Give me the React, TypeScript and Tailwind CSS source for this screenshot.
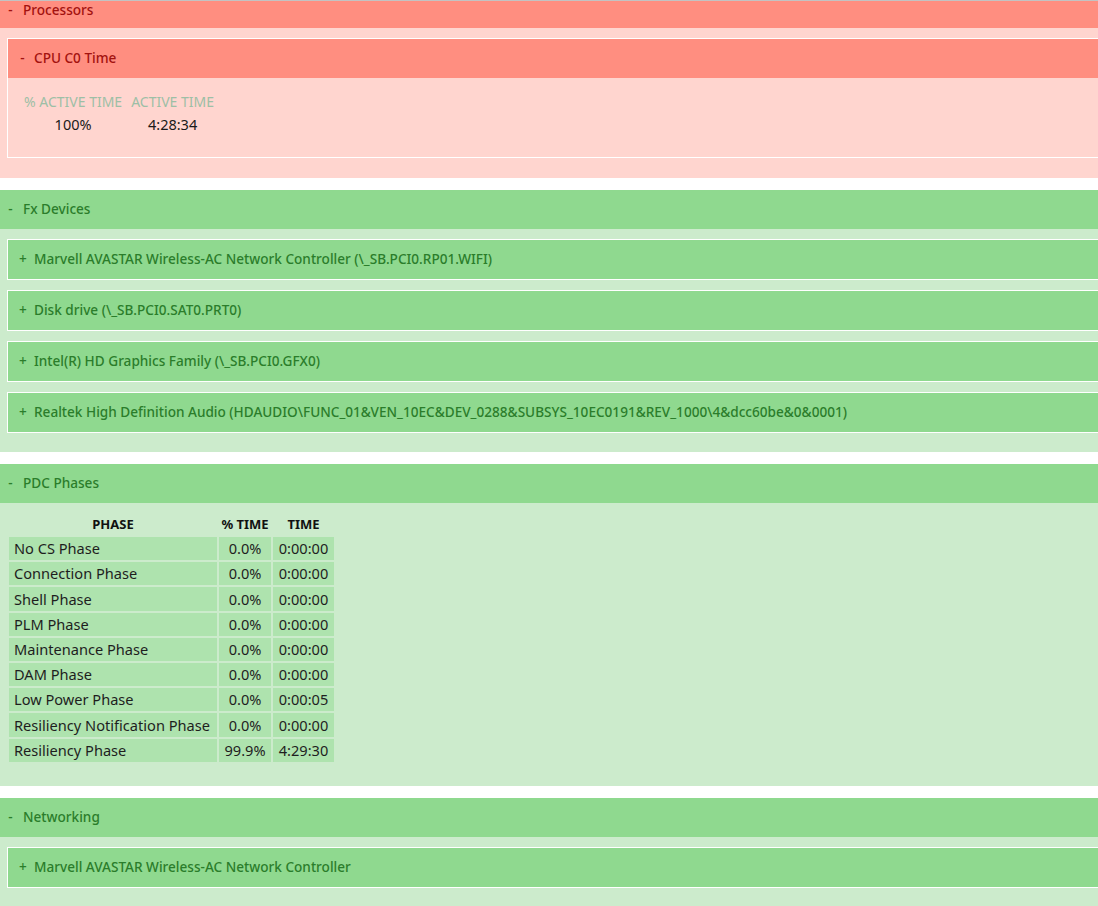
import type { ReactNode } from "react";

type Tone = "red" | "green";

const tones = {
  red: {
    head: "bg-[#ff8e80] text-[#a3120f]",
    body: "bg-[#ffd5cf]",
  },
  green: {
    head: "bg-[#8fd98f] text-[#2b7d2b]",
    body: "bg-[#ccebcc]",
  },
};

const Header = ({ sign, title, tone, nested, className = "" }: { sign: string; title: string; tone: Tone; nested?: boolean; className?: string }) => (
  <div
    className={`flex h-[39px] items-center text-[13.6px] font-medium ${nested ? "gap-[8px] pl-[11px]" : "gap-[9px] pl-[7px]"} ${tones[tone].head} ${className}`}
  >
    <span className="w-[7px] text-center">{sign}</span>
    <span className="whitespace-nowrap">{title}</span>
  </div>
);

const Section = ({ title, tone, children, className, headClass }: { title: string; tone: Tone; children: ReactNode; className: string; headClass?: string }) => (
  <section>
    <Header sign="-" title={title} tone={tone} className={headClass} />
    <div className={`${tones[tone].body} ${className}`}>{children}</div>
  </section>
);

const Device = ({ name }: { name: string }) => (
  <div className="ml-[7px] border border-r-0 border-white">
    <Header sign="+" title={name} tone="green" nested />
  </div>
);

const devices = [
  "Marvell AVASTAR Wireless-AC Network Controller (\\_SB.PCI0.RP01.WIFI)",
  "Disk drive (\\_SB.PCI0.SAT0.PRT0)",
  "Intel(R) HD Graphics Family (\\_SB.PCI0.GFX0)",
  "Realtek High Definition Audio (HDAUDIO\\FUNC_01&VEN_10EC&DEV_0288&SUBSYS_10EC0191&REV_1000\\4&dcc60be&0&0001)",
];

const phases = [
  ["No CS Phase", "0.0%", "0:00:00"],
  ["Connection Phase", "0.0%", "0:00:00"],
  ["Shell Phase", "0.0%", "0:00:00"],
  ["PLM Phase", "0.0%", "0:00:00"],
  ["Maintenance Phase", "0.0%", "0:00:00"],
  ["DAM Phase", "0.0%", "0:00:00"],
  ["Low Power Phase", "0.0%", "0:00:05"],
  ["Resiliency Notification Phase", "0.0%", "0:00:00"],
  ["Resiliency Phase", "99.9%", "4:29:30"],
];

export default function App() {
  return (
    <div
      className="h-[906px] w-[1098px] overflow-hidden border-t border-[#c3c3c3] bg-white"
      style={{ fontFamily: '"Noto Sans", "Open Sans", sans-serif' }}
    >
      <div className="-mt-[12px] flex flex-col gap-[12px]">
        <Section title="Processors" tone="red" headClass="pt-[4px]" className="pt-[10px] pb-[20px]">
          <div className="ml-[7px] border border-r-0 border-white">
            <Header sign="-" title="CPU C0 Time" tone="red" nested />
            <div className="flex h-[79px] gap-[9px] pl-[16px] pt-[13px]">
              <div className="flex flex-col items-center">
                <span className="text-[14px] text-[#9dbfa6]">% ACTIVE TIME</span>
                <span className="mt-[2px] text-[14.5px] text-[#1a1a1a]">100%</span>
              </div>
              <div className="flex flex-col items-center">
                <span className="text-[14px] text-[#9dbfa6]">ACTIVE TIME</span>
                <span className="mt-[2px] text-[14.5px] text-[#1a1a1a]">4:28:34</span>
              </div>
            </div>
          </div>
        </Section>

        <Section title="Fx Devices" tone="green" className="flex flex-col gap-[10px] pt-[10px] pb-[19px]">
          {devices.map((d, i) => (
            <Device key={`dev-${i}`} name={d} />
          ))}
        </Section>

        <Section title="PDC Phases" tone="green" className="pt-[10px] pb-[22px] pl-[7px]">
          <table className="border-separate border-spacing-[2px] text-[14.6px] text-[#1e1e1e]">
            <thead>
              <tr className="h-[20px] text-[13px] font-semibold text-[#111]">
                <th className="w-[208px] text-center">PHASE</th>
                <th className="w-[52px] text-center">% TIME</th>
                <th className="w-[61px] text-center">TIME</th>
              </tr>
            </thead>
            <tbody>
              {phases.map(([name, pct, time]) => (
                <tr key={name} className="h-[23.2px]">
                  <td className="bg-[#aee3ae] px-[5px] leading-none whitespace-nowrap">{name}</td>
                  <td className="bg-[#aee3ae] text-center leading-none">{pct}</td>
                  <td className="bg-[#aee3ae] text-center leading-none">{time}</td>
                </tr>
              ))}
            </tbody>
          </table>
        </Section>

        <Section title="Networking" tone="green" className="pt-[10px] pb-[20px]">
          <Device name="Marvell AVASTAR Wireless-AC Network Controller" />
        </Section>
      </div>
    </div>
  );
}
